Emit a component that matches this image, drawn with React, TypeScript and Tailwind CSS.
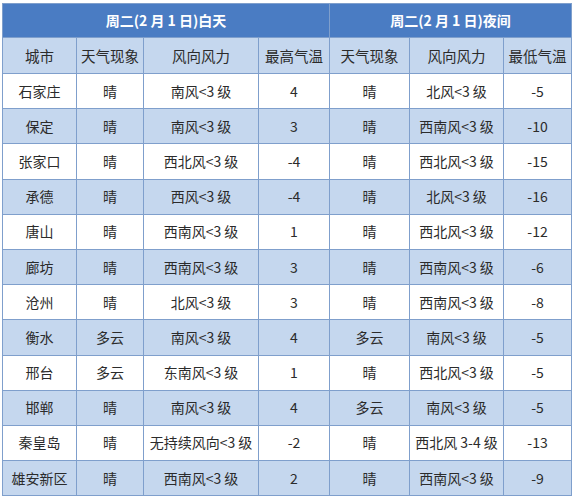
import React from 'react';

type Row = [string, string, string, string, string, string, string];

const rows: Row[] = [
  ['石家庄', '晴', '南风<3 级', '4', '晴', '北风<3 级', '-5'],
  ['保定', '晴', '南风<3 级', '3', '晴', '西南风<3 级', '-10'],
  ['张家口', '晴', '西北风<3 级', '-4', '晴', '西北风<3 级', '-15'],
  ['承德', '晴', '西风<3 级', '-4', '晴', '北风<3 级', '-16'],
  ['唐山', '晴', '西南风<3 级', '1', '晴', '西北风<3 级', '-12'],
  ['廊坊', '晴', '西南风<3 级', '3', '晴', '西南风<3 级', '-6'],
  ['沧州', '晴', '北风<3 级', '3', '晴', '西南风<3 级', '-8'],
  ['衡水', '多云', '南风<3 级', '4', '多云', '南风<3 级', '-5'],
  ['邢台', '多云', '东南风<3 级', '1', '晴', '西北风<3 级', '-5'],
  ['邯郸', '晴', '南风<3 级', '4', '多云', '南风<3 级', '-5'],
  ['秦皇岛', '晴', '无持续风向<3 级', '-2', '晴', '西北风 3-4 级', '-13'],
  ['雄安新区', '晴', '西南风<3 级', '2', '晴', '西南风<3 级', '-9'],
];

const widths = ['w-[74px]', 'w-[67px]', 'w-[115px]', 'w-[71px]', 'w-[80px]', 'w-[94px]', 'w-[68px]'];
const heads = ['城市', '天气现象', '风向风力', '最高气温', '天气现象', '风向风力', '最低气温'];

export default function App() {
  return (
    <div
      className="w-[574px] h-[500px] bg-white pt-[3px] pl-[2px] overflow-hidden"
      style={{ fontFamily: '"Microsoft YaHei", "Noto Sans CJK SC", "Noto Sans", sans-serif' }}
    >
      <table className="border-collapse table-fixed w-[569px] text-[14px] text-[#2b2b2b]">
        <colgroup>
          {widths.map((w, i) => (
            <col key={i} className={w} />
          ))}
        </colgroup>
        <thead>
          <tr className="h-[34px] bg-[#4a7cc3] text-white font-bold">
            <th colSpan={4} className="border border-[#7f9fcc] font-bold">
              周二(2 月 1 日)白天
            </th>
            <th colSpan={3} className="border border-[#7f9fcc] font-bold">
              周二(2 月 1 日)夜间
            </th>
          </tr>
          <tr className="h-[36px] bg-[#c5d7ee]">
            {heads.map((h, i) => (
              <th key={i} className="border border-[#7f9fcc] font-normal text-[14.5px]">
                {h}
              </th>
            ))}
          </tr>
        </thead>
        <tbody>
          {rows.map((r, ri) => (
            <tr key={ri} className={`h-[35.2px] ${ri % 2 === 1 ? 'bg-[#c5d7ee]' : 'bg-white'}`}>
              {r.map((c, ci) => (
                <td key={ci} className="border border-[#7f9fcc] text-center whitespace-nowrap p-0">
                  {c}
                </td>
              ))}
            </tr>
          ))}
        </tbody>
      </table>
    </div>
  );
}
